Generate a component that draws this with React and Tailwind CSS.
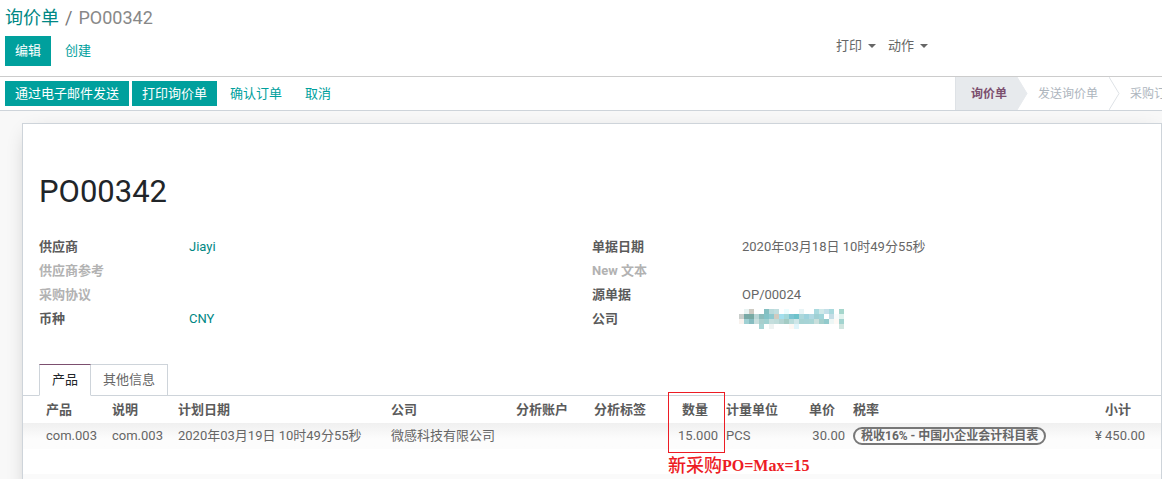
const STAGES = ["发送询价单", "采购订单"];

const LEFT_FIELDS = [
  { label: "供应商", value: "Jiayi", link: true },
  { label: "供应商参考", muted: true },
  { label: "采购协议", muted: true },
  { label: "币种", value: "CNY", link: true },
];

const RIGHT_FIELDS = [
  { label: "单据日期", value: "2020年03月18日 10时49分55秒" },
  { label: "New 文本", muted: true },
  { label: "源单据", value: "OP/00024" },
  { label: "公司", hidden: true },
];

// 5px tiles, one list per row; null leaves the tile empty
const MOSAIC = [
  [null, "#e8f3f2", "#cdcac2", null, null, "#84bfc1", "#b9dadb", "#c0dedf", null, "#ecfdff", null, null, "#e8f4f6", null, null, "#aadadf", "#d0e9e9", "#c3dfe8", "#a8d9dd", null, "#a5d6cc"],
  ["#c9cecb", "#78a9a6", "#78a9a3", "#b8d6d6", "#8bbcbb", "#83c3c7", "#8fc9cf", "#d1cbc0", "#a3dfee", "#a3d8da", "#7cc4d2", "#6dc2ca", "#acd7db", "#9dd2dc", "#b0d8e2", "#a0d0d4", "#a0d5da", "#ffffff", "#c4dde6", "#f7fbfb", "#e0f3ee"],
  ["#f8f2ee", "#9fd0d3", "#86bcc0", "#c8dedd", "#a8cfcd", "#9fd0d0", "#c4dedd", "#bfdcda", "#b3d3d1", "#a3cbc4", "#b9dcdb", "#cfe6e8", "#a6d3d3", "#a6d3d6", "#a8d5d5", "#c9dfdc", "#a3cfcc", "#92cacc", "#edf6f5", "#fdf9f5", "#a3d4d0"],
  [null, null, null, null, "#a8d5d5", null, "#eef3f2", null, null, null, "#fef8f4", "#e0f5fb", null, null, null, null, null, null, null, null, "#d0e5df"],
];

function Mosaic() {
  return (
    <svg width="105" height="20" className="-ml-[3px]" shapeRendering="crispEdges" aria-hidden="true">
      {MOSAIC.map((row, y) =>
        row.map((fill, x) =>
          fill ? <rect key={`${x}-${y}`} x={x * 5} y={y * 5} width="5" height="5" fill={fill} /> : null
        )
      )}
    </svg>
  );
}

function Caret() {
  return (
    <svg width="8" height="4" viewBox="0 0 8 4" aria-hidden="true">
      <path d="M0 0h8L4 4z" fill="#666666" />
    </svg>
  );
}

function FieldList({ fields }) {
  return (
    <dl>
      {fields.map((f) => (
        <div key={f.label} className="flex h-6 items-center">
          <dt className={f.muted ? "w-[150px] font-bold text-[#b2b2b2]" : "w-[150px] font-bold text-[#5b5b5b]"}>
            {f.label}
          </dt>
          <dd>
            {f.link && <a href="#" className="text-[#008784]">{f.value}</a>}
            {!f.link && f.value}
            {f.hidden && <Mosaic />}
          </dd>
        </div>
      ))}
    </dl>
  );
}

function PrimaryButton({ className, children }) {
  return (
    <button type="button" className={`bg-[#00a09d] px-[10px] text-white ${className}`}>
      {children}
    </button>
  );
}

function LinkButton({ className, children }) {
  return (
    <button type="button" className={`px-[10px] text-[#00a09d] ${className}`}>
      {children}
    </button>
  );
}

function StageArrow({ fill, stroke }) {
  return (
    <svg
      width="11"
      height="33"
      viewBox="0 0 11 33"
      className="absolute top-0 left-full"
      aria-hidden="true"
    >
      <path d="M0 0L10 16.5L0 33" fill={fill} stroke={stroke} />
    </svg>
  );
}

function ControlPanel() {
  return (
    <header className="flex h-[77px] shrink-0 border-b border-[#cccccc] pl-[5px]">
      <div className="flex-1">
        <nav className="flex h-9 items-center gap-[6px] text-[18px]">
          <a href="#" className="text-[#008784]">询价单</a>
          <span className="text-[#777777]">/</span>
          <span className="text-[#888888]">PO00342</span>
        </nav>
        <div className="flex gap-1">
          <PrimaryButton className="h-[30px]">编辑</PrimaryButton>
          <LinkButton className="h-[30px]">创建</LinkButton>
        </div>
      </div>
      <div className="flex w-[326px] items-start gap-3 pt-9">
        <button type="button" className="flex h-5 items-center gap-[6px]">
          打印 <Caret />
        </button>
        <button type="button" className="flex h-5 items-center gap-[6px]">
          动作 <Caret />
        </button>
      </div>
    </header>
  );
}

function StatusBar() {
  return (
    <div className="flex h-[34px] shrink-0 items-center justify-between border-b border-[#ced4da] pl-[5px]">
      <div className="flex gap-[3px]">
        <PrimaryButton className="h-[25px]">通过电子邮件发送</PrimaryButton>
        <PrimaryButton className="h-[25px]">打印询价单</PrimaryButton>
        <LinkButton className="h-[25px]">确认订单</LinkButton>
        <LinkButton className="h-[25px]">取消</LinkButton>
      </div>
      <div className="flex h-full w-[207px] overflow-hidden border-l border-[#dee2e6] text-[12px] whitespace-nowrap text-[#adb5bd]">
        <button type="button" className="relative shrink-0 bg-[#e7eaed] pr-[10px] pl-[15px] font-bold text-[#7c4f6f]">
          询价单
          <StageArrow fill="#e7eaed" stroke="#e7eaed" />
        </button>
        {STAGES.map((stage) => (
          <button key={stage} type="button" className="relative shrink-0 pr-[11px] pl-[21px]">
            {stage}
            <StageArrow fill="none" stroke="#dee2e6" />
          </button>
        ))}
      </div>
    </div>
  );
}

function OrderLines() {
  return (
    <table className="w-full table-fixed border-collapse whitespace-nowrap">
      <colgroup>
        <col className="w-[85px]" />
        <col className="w-[66px]" />
        <col className="w-[213px]" />
        <col className="w-[125px]" />
        <col className="w-[78px]" />
        <col className="w-[78px]" />
        <col className="w-[54px]" />
        <col className="w-[73px]" />
        <col className="w-[54px]" />
        <col />
        <col className="w-[96px]" />
      </colgroup>
      <thead>
        <tr className="h-[27px] text-left text-[#5b5b5b]">
          <th className="pl-[23px]">产品</th>
          <th className="pl-1">说明</th>
          <th className="pl-1">计划日期</th>
          <th className="pl-1">公司</th>
          <th className="pl-1">分析账户</th>
          <th className="pl-1">分析标签</th>
          <th className="relative pr-[14px] text-right">
            数量
            <div className="absolute -top-1 left-0 h-[61px] w-[57px] border border-[#ed1c24]" />
            <div className="absolute top-[58px] left-0 flex items-center text-[#ed1c24]">
              <span className="text-[18px] leading-6 font-medium">新采购</span>
              <span className="font-['Liberation_Serif',serif] text-[16px] leading-6 font-bold">PO=Max=15</span>
            </div>
          </th>
          <th className="pl-1">计量单位</th>
          <th className="pr-[14px] text-right">单价</th>
          <th className="pl-1">税率</th>
          <th className="pr-[30px] text-right">小计</th>
        </tr>
      </thead>
      <tbody>
        <tr className="h-[26px] bg-linear-to-b from-[#f0f0f0] to-[#fcfcfc] to-60%">
          <td className="pl-[23px]">com.003</td>
          <td className="pl-1">com.003</td>
          <td className="pl-1">2020年03月19日 10时49分55秒</td>
          <td className="pl-1">微感科技有限公司</td>
          <td />
          <td />
          <td className="pr-1 text-right">15.000</td>
          <td className="pl-1">PCS</td>
          <td className="pr-1 text-right">30.00</td>
          <td className="pl-1">
            <span className="inline-block rounded-full border-2 border-[#777777] px-[6px] text-[12px] leading-[14px] font-bold">
              税收16% - 中国小企业会计科目表
            </span>
          </td>
          <td className="pr-4 text-right">¥ 450.00</td>
        </tr>
        <tr className="h-[25px]">
          <td colSpan={11} />
        </tr>
        <tr className="h-[25px] bg-[#fafafa]">
          <td colSpan={11} />
        </tr>
      </tbody>
    </table>
  );
}

export default function App() {
  return (
    <div className="flex h-screen flex-col overflow-hidden bg-white font-[Roboto,'Noto_Sans_CJK_SC',sans-serif] text-[13px] leading-5 text-[#666666]">
      <ControlPanel />
      <StatusBar />
      <main className="flex flex-1 flex-col bg-[#f8f8f8] pt-3 pl-[22px]">
        <section className="flex-1 border border-b-0 border-[#ced4da] bg-white shadow-[0_5px_20px_-8px_rgba(0,0,0,0.3)]">
          <div className="px-4 pt-12">
            <h1 className="text-[31px] leading-10 text-[#212529]">PO00342</h1>
            <div className="mt-[23px] grid grid-cols-2">
              <FieldList fields={LEFT_FIELDS} />
              <FieldList fields={RIGHT_FIELDS} />
            </div>
          </div>
          <div className="mt-[33px] flex h-8 border-b border-[#ced4da] pl-4">
            <button
              type="button"
              className="-mb-px border border-t-[#7c4f6f] border-r-[#ced4da] border-b-white border-l-[#ced4da] bg-white px-3 text-[#212529]"
            >
              产品
            </button>
            <button type="button" className="border border-b-0 border-l-0 border-[#ced4da] px-3">
              其他信息
            </button>
          </div>
          <OrderLines />
        </section>
      </main>
    </div>
  );
}
